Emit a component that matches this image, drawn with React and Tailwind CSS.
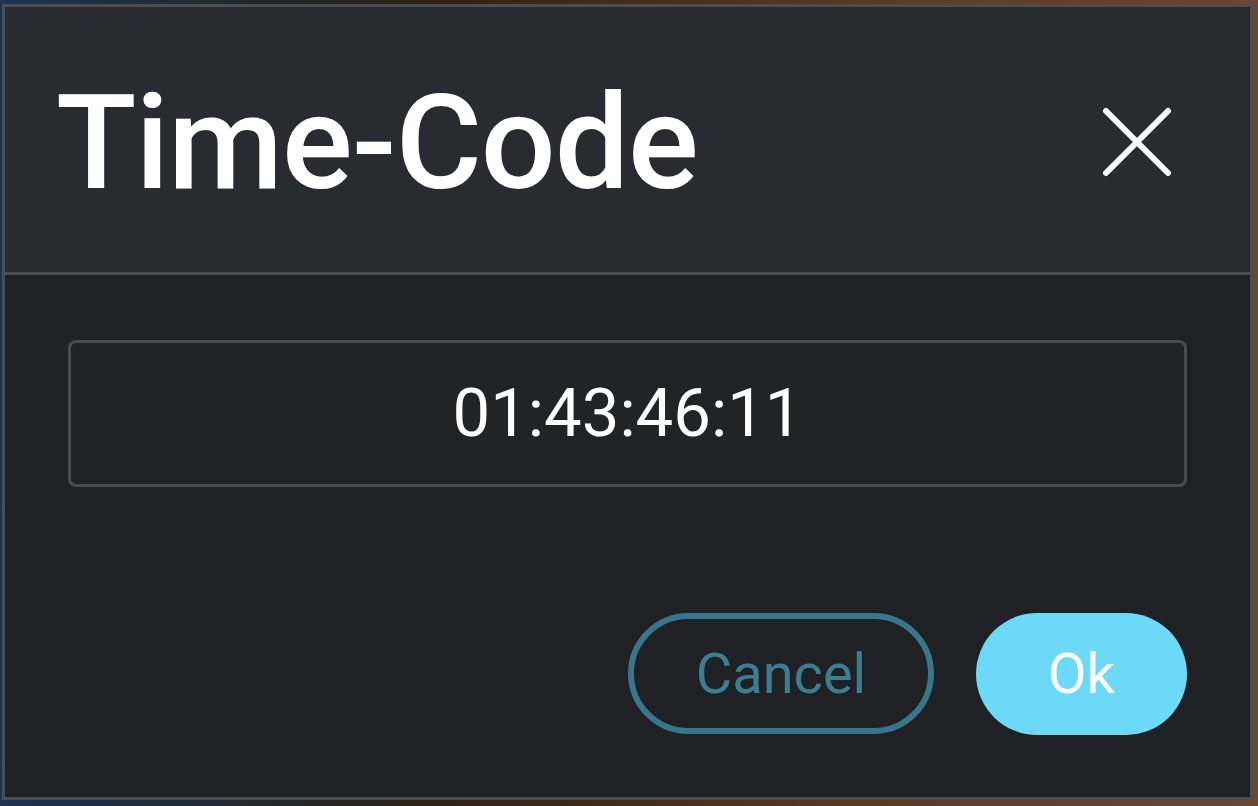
export default function App() {
  return (
    <div
      className="w-[1258px] h-[806px] overflow-hidden bg-[linear-gradient(90deg,#1c3352_0%,#22272c_20%,#2e2216_35%,#5a3a26_70%,#6b4632_100%)]"
      style={{ fontFamily: 'Roboto, "Liberation Sans", sans-serif' }}
    >
      <div className="ml-[2px] mt-[4px] w-[1251px] h-[796px] border-[3px] border-[#4b4d51] bg-[#202124] flex flex-col">
        <div className="h-[268px] shrink-0 bg-[#282b30] border-b-[3px] border-[#4b4d51] flex items-center justify-between pl-[51px] pr-[78px]">
          <h1 className="text-[132px] leading-none text-white font-medium tracking-[-1px] pt-[6px]">Time-Code</h1>
          <svg width="70" height="70" viewBox="0 0 70 70" className="mt-[4px]">
            <path d="M4 4 L66 66 M66 4 L4 66" stroke="white" strokeWidth="6" strokeLinecap="round" fill="none" />
          </svg>
        </div>
        <div className="flex-1 px-[63px] pt-[65px] flex flex-col">
          <div className="h-[147px] rounded-[8px] border-[3px] border-[#4a4b4e] bg-[#222325] flex items-center justify-center">
            <span className="text-[67px] text-white leading-none">01:43:46:11</span>
          </div>
          <div className="mt-[126px] flex justify-end gap-[42px]">
            <button className="w-[306px] h-[121px] rounded-full border-[6px] border-[#36778b] text-[#3b7d91] text-[56px] leading-none">
              Cancel
            </button>
            <button className="w-[211px] h-[122px] rounded-full bg-[#6bd9f7] text-white text-[56px] leading-none">
              Ok
            </button>
          </div>
        </div>
      </div>
    </div>
  );
}
